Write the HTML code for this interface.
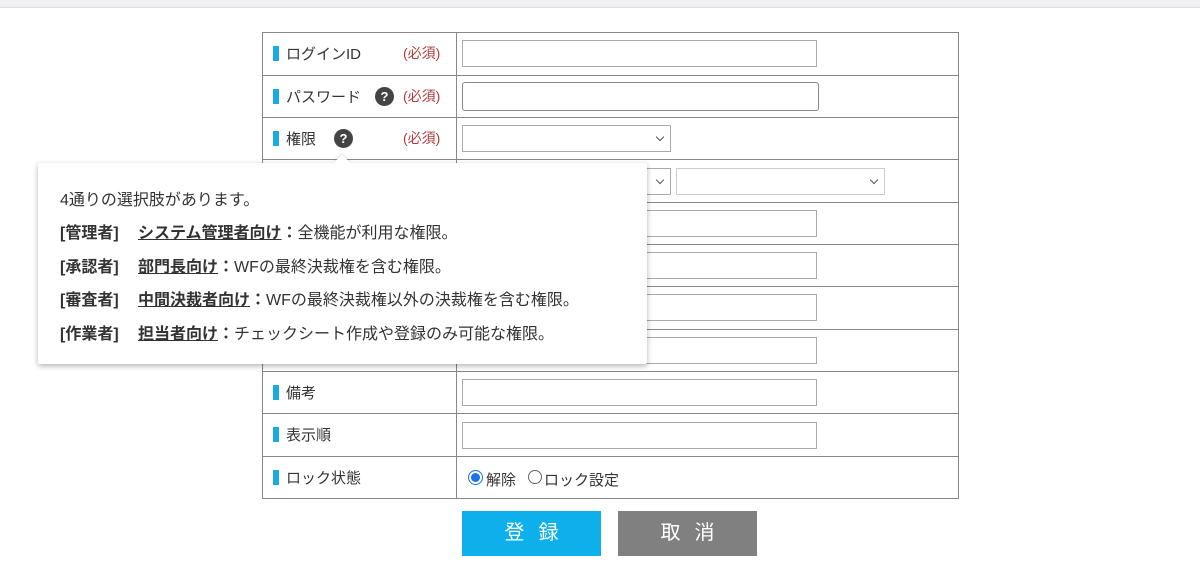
<!DOCTYPE html>
<html><head><meta charset="utf-8"><style>
*{box-sizing:border-box;margin:0;padding:0}
body{width:1200px;height:568px;background:#fff;position:relative;overflow:hidden;font-family:"Liberation Sans","Noto Sans CJK JP",sans-serif;color:#333;font-size:15px}
.top{position:absolute;left:0;top:0;width:1200px;height:8px;background:#f0f0f2;border-bottom:1px solid #dcdcdc}
.row{position:absolute;left:262px;width:697px;border:1px solid #888;border-bottom:none}
.lab{position:absolute;left:0;top:0;width:194px;height:100%;border-right:1px solid #888}
.bar{position:absolute;left:10px;width:6px;height:15px;background:#1ba9e1}
.lt{position:absolute;left:23px;font-size:15px;color:#333}
.req{position:absolute;left:140px;color:#b03a3a;font-size:14px}
.q{position:absolute;width:19px;height:19px;border-radius:50%;background:#444;color:#fff;font-weight:bold;font-size:13px;text-align:center;line-height:19px}
.inp{position:absolute;border:1px solid #aaa;background:#fff;height:27px}
.sel{position:absolute;border:1px solid #aaa;background:#fff;height:27px}
.sel:after{content:"";position:absolute;right:7px;top:8px;width:5px;height:5px;border-right:1.3px solid #555;border-bottom:1.3px solid #555;transform:rotate(45deg)}
.btn{position:absolute;top:511px;width:139px;height:45px;color:#fff;font-size:20px;text-align:center;line-height:45px;letter-spacing:14px;padding-left:14px}
.tip{position:absolute;left:38px;top:163px;width:609px;height:201px;background:#fff;box-shadow:0 2px 6px rgba(0,0,0,.3);border-radius:2px}
.tip p{position:absolute;left:22px;font-size:16px;color:#333;white-space:nowrap}
.tip b{font-weight:bold;display:inline-block;width:78px}
.tip u{font-weight:bold}
</style></head><body>
<div class="top"></div>

<div class="row" style="top:32px;height:43px"><div class="lab"><div class="bar" style="top:13px"></div><div class="lt" style="top:10px">ログインID</div><div class="req" style="top:10px">(必須)</div></div><div class="inp" style="left:199px;top:7px;width:355px"></div></div>
<div class="row" style="top:75px;height:42px"><div class="lab"><div class="bar" style="top:13px"></div><div class="lt" style="top:10px">パスワード</div><div class="q" style="left:112px;top:11px">?</div><div class="req" style="top:10px">(必須)</div></div><div class="inp" style="left:199px;top:6px;width:357px;height:29px;border-radius:3px;border-color:#888"></div></div>
<div class="row" style="top:117px;height:42px"><div class="lab"><div class="bar" style="top:13px"></div><div class="lt" style="top:10px">権限</div><div class="q" style="left:71px;top:11px">?</div><div class="req" style="top:10px">(必須)</div></div><div class="sel" style="left:199px;top:7px;width:209px"></div></div>
<div class="row" style="top:159px;height:43px"><div class="lab"></div><div class="sel" style="left:199px;top:8px;width:209px"></div><div class="sel" style="left:413px;top:8px;width:209px;border-color:#ccc"></div></div>
<div class="row" style="top:202px;height:42px"><div class="lab"></div><div class="inp" style="left:199px;top:7px;width:355px"></div></div>
<div class="row" style="top:244px;height:42px"><div class="lab"></div><div class="inp" style="left:199px;top:7px;width:355px"></div></div>
<div class="row" style="top:286px;height:43px"><div class="lab"></div><div class="inp" style="left:199px;top:7px;width:355px"></div></div>
<div class="row" style="top:329px;height:42px"><div class="lab"></div><div class="inp" style="left:199px;top:7px;width:355px"></div></div>
<div class="row" style="top:371px;height:42px"><div class="lab"><div class="bar" style="top:13px"></div><div class="lt" style="top:10px">備考</div></div><div class="inp" style="left:199px;top:7px;width:355px"></div></div>
<div class="row" style="top:413px;height:43px"><div class="lab"><div class="bar" style="top:13px"></div><div class="lt" style="top:10px">表示順</div></div><div class="inp" style="left:199px;top:8px;width:355px"></div></div>
<div class="row" style="top:456px;height:43px;border-bottom:1px solid #888"><div class="lab"><div class="bar" style="top:13px"></div><div class="lt" style="top:10px">ロック状態</div></div>
<div style="position:absolute;left:205px;top:13px;width:15px;height:15px;border-radius:50%;border:1px solid #1a6fd6;background:#fff"><div style="position:absolute;left:2px;top:2px;width:9px;height:9px;border-radius:50%;background:#1a73e8"></div></div>
<div style="position:absolute;left:223px;top:12px">解除</div>
<div style="position:absolute;left:265px;top:13px;width:14px;height:14px;border-radius:50%;border:1px solid #666"></div>
<div style="position:absolute;left:281px;top:12px">ロック設定</div></div>

<div class="btn" style="left:462px;background:#0db0ea">登録</div>
<div class="btn" style="left:618px;background:#808080">取消</div>

<div class="tip">
<div style="position:absolute;left:298px;top:-6px;width:12px;height:12px;background:#fff;transform:rotate(45deg);box-shadow:-1px -1px 2px rgba(0,0,0,.12)"></div>
<p style="top:23px">4通りの選択肢があります。</p>
<p style="top:56px"><b>[管理者]</b><u>システム管理者向け</u><strong>：</strong>全機能が利用な権限。</p>
<p style="top:90px"><b>[承認者]</b><u>部門長向け</u><strong>：</strong>WFの最終決裁権を含む権限。</p>
<p style="top:123px"><b>[審査者]</b><u>中間決裁者向け</u><strong>：</strong>WFの最終決裁権以外の決裁権を含む権限。</p>
<p style="top:157px"><b>[作業者]</b><u>担当者向け</u><strong>：</strong>チェックシート作成や登録のみ可能な権限。</p>
</div>
</body></html>
